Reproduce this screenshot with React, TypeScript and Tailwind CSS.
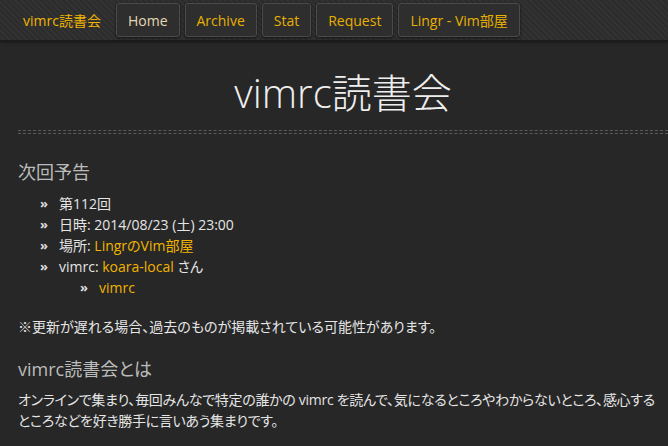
const navItems = ["Home", "Archive", "Stat", "Request", "Lingr - Vim部屋"];

function Bullet() {
  return <span className="w-[19px] shrink-0 text-[13px] font-bold text-[#ddd]">»</span>;
}

export default function App() {
  return (
    <div
      className="min-h-[446px] w-[668px] overflow-hidden bg-[#272727] text-[14px] text-[#e5e5e5] [font-feature-settings:'palt']"
      style={{ fontFamily: '"Open Sans", "Noto Sans CJK JP", sans-serif' }}
    >
      {/* navbar */}
      <div className="flex h-[41px] items-center border-b border-[#1c1c1c] bg-[repeating-linear-gradient(45deg,#2c2c2c_0px,#2c2c2c_2px,#323232_2px,#323232_4px)] shadow-[0_1px_3px_rgba(0,0,0,0.5)]">
        <div className="ml-[23px] mr-[15px] text-[14px] text-[#f0b400]">vimrc読書会</div>
        <div className="flex gap-[5px]">
          {navItems.map((item, i) => (
            <div
              key={item}
              className={`flex h-[34px] items-center rounded-[3px] border border-[#4a4a4a] bg-[#2e2e2e] px-[11px] text-[14px] shadow-[0_1px_3px_rgba(0,0,0,0.6)] ${
                i === 0 ? "text-[#e3d9b4]" : "text-[#e8b000]"
              }`}
            >
              {item}
            </div>
          ))}
        </div>
      </div>

      <div className="pl-[18px]">
        <h1 className="pt-[24px] text-center text-[40px] font-light leading-[56px] text-[#eeeeee]">vimrc読書会</h1>
        <div className="mt-[9px] h-[4px] border-y border-dashed border-[#5a5a5a]" />

        <h2 className="mt-[25px] text-[18px] leading-[26px] text-[#bbbbbb]">次回予告</h2>
        <ul className="mt-[8px] flex flex-col pl-[22px] leading-[21px]">
          <li className="flex">
            <Bullet />
            第112回
          </li>
          <li className="flex">
            <Bullet />
            日時: 2014/08/23 (土) 23:00
          </li>
          <li className="flex">
            <Bullet />
            場所:&nbsp;<span className="text-[#f0b400]">LingrのVim部屋</span>
          </li>
          <li className="flex">
            <Bullet />
            vimrc:&nbsp;<span className="text-[#f0b400]">koara-local</span>&nbsp;さん
          </li>
          <li className="flex pl-[40px]">
            <Bullet />
            <span className="text-[#f0b400]">vimrc</span>
          </li>
        </ul>

        <p className="mt-[18px] leading-[21px]">※更新が遅れる場合、過去のものが掲載されている可能性があります。</p>

        <h2 className="mt-[19px] text-[18px] leading-[26px] text-[#bbbbbb]">vimrc読書会とは</h2>
        <p className="mt-[7px] w-[650px] leading-[21px] tracking-[-0.3px]">
          オンラインで集まり、毎回みんなで特定の誰かの vimrc を読んで、気になるところやわからないところ、感心する
          <br />
          ところなどを好き勝手に言いあう集まりです。
        </p>
      </div>
    </div>
  );
}
